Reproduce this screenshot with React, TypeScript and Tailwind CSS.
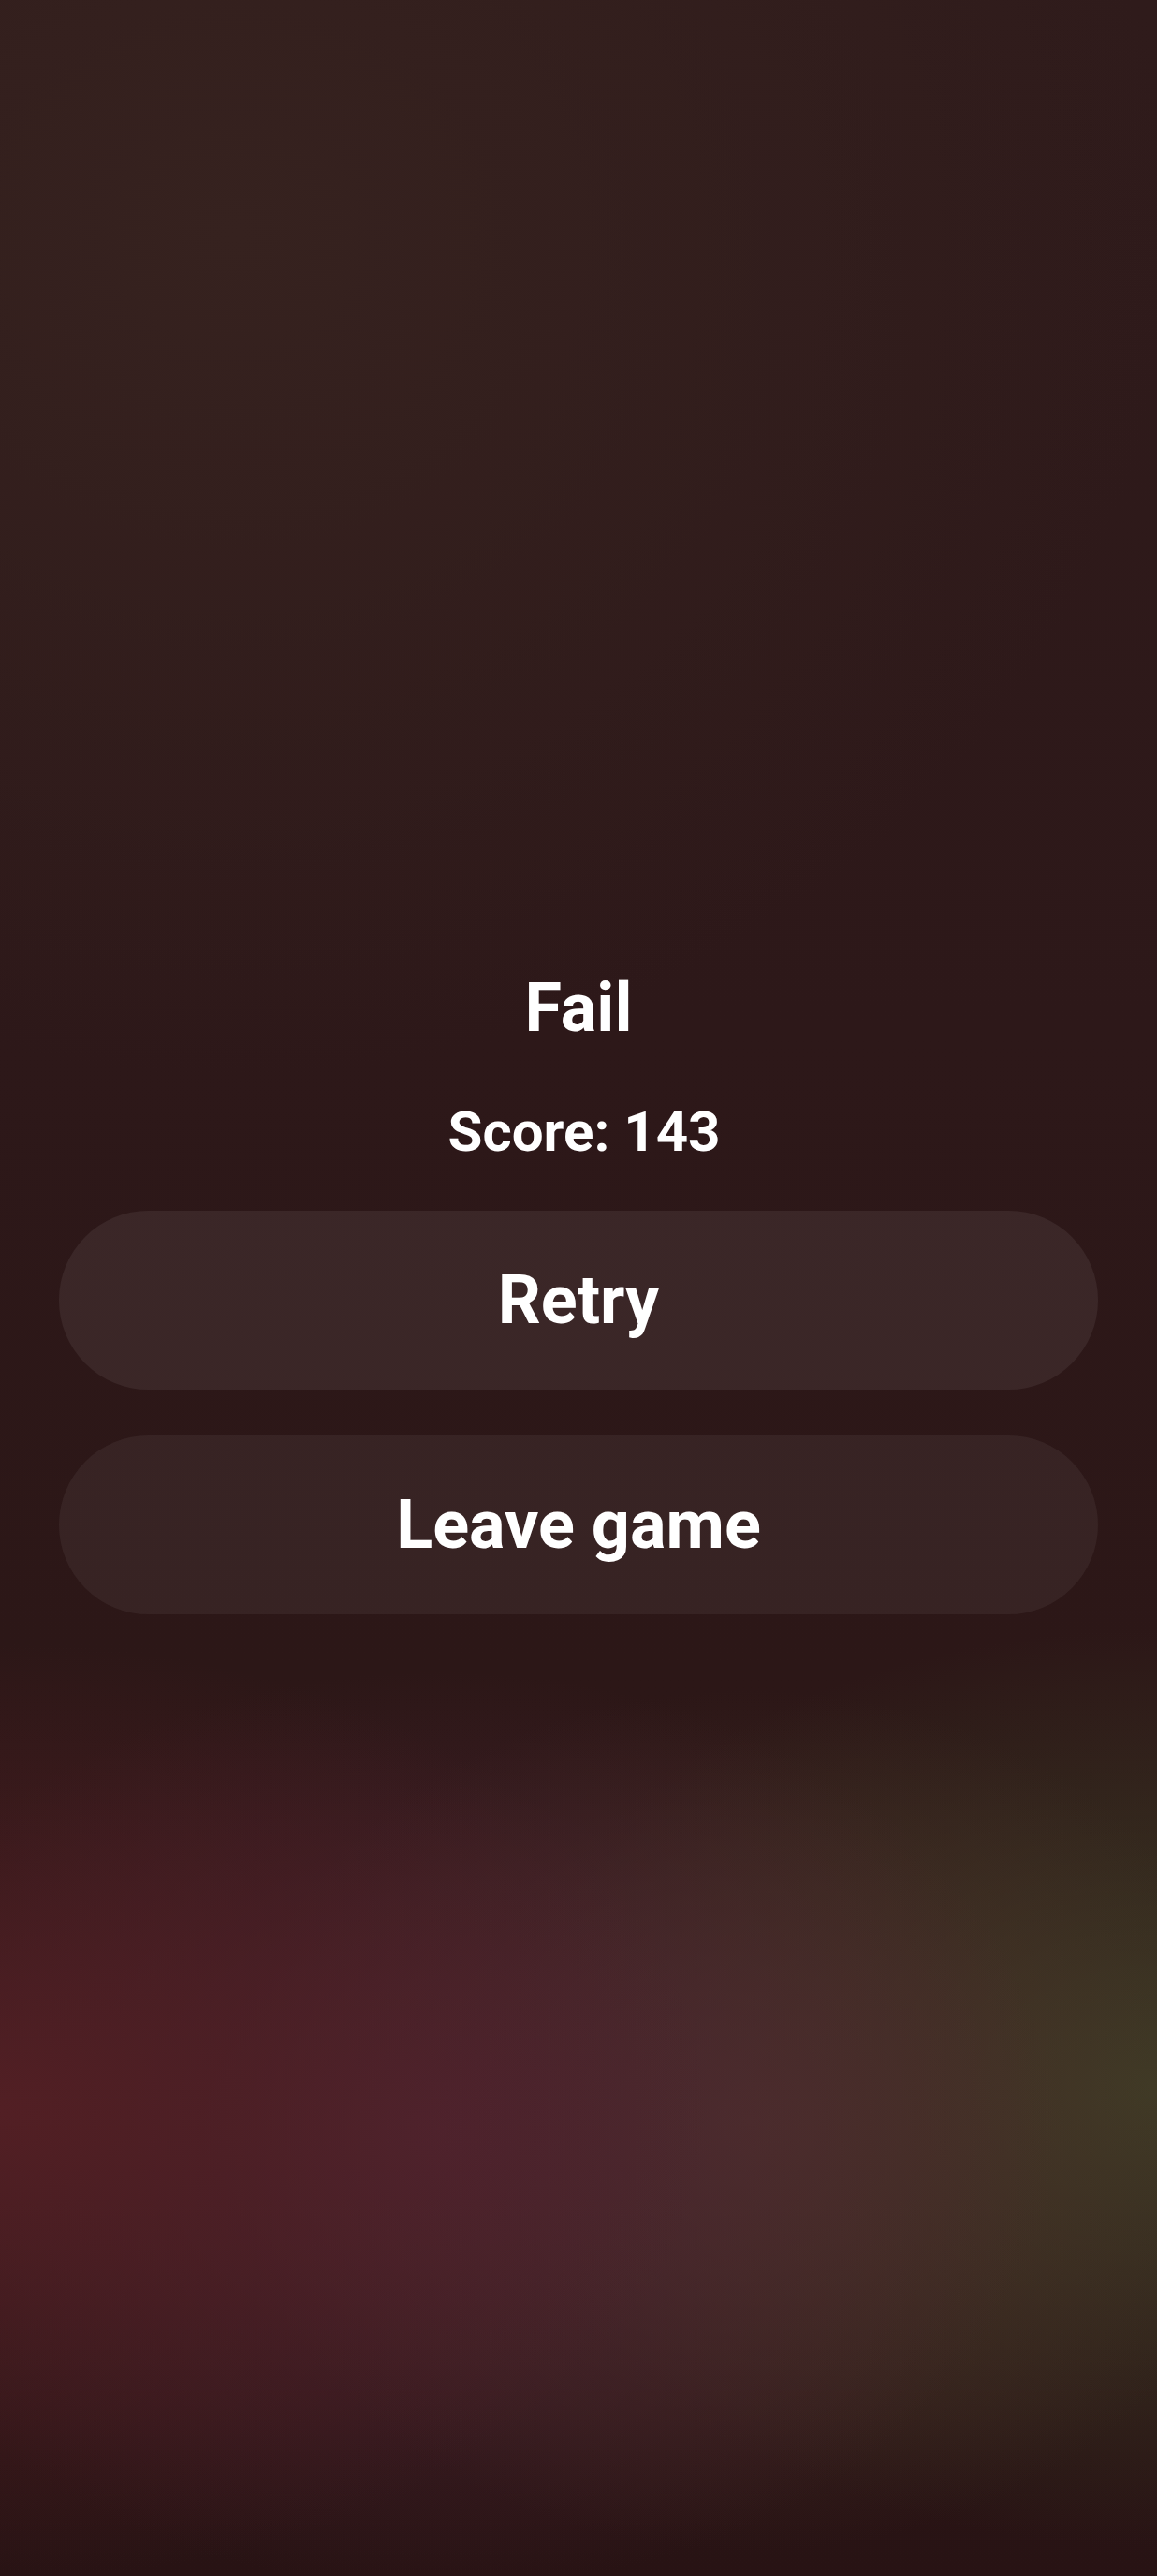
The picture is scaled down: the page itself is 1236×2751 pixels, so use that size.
import React from "react";

export default function App() {
  return (
    <div
      className="relative w-full min-h-[2751px] bg-[#2d1819] bg-[radial-gradient(ellipse_760px_500px_at_0px_2255px,#521f24_0%,rgba(82,31,36,0)_100%),radial-gradient(ellipse_660px_490px_at_470px_2275px,#4c2431_0%,rgba(76,36,49,0)_100%),radial-gradient(ellipse_560px_460px_at_800px_2265px,#4a3229_0%,rgba(74,50,41,0)_100%),radial-gradient(ellipse_720px_490px_at_1236px_2230px,#3d3c25_0%,rgba(61,60,37,0)_100%),radial-gradient(ellipse_1000px_900px_at_250px_250px,#36221f_0%,rgba(54,34,31,0)_100%),linear-gradient(180deg,#2f1b1b_0%,#2d1819_40%,#2c1717_65%,#2b1616_85%,#281314_100%)]"
      style={{ fontFamily: "Roboto, 'Liberation Sans', sans-serif" }}
    >
      <div className="flex flex-col items-center pt-[1041px] px-[63px]">
        <h1 className="text-[72px] leading-none font-bold text-white">Fail</h1>
        <p className="mt-[66px] ml-[12px] text-[60px] leading-none font-bold text-white">Score: 143</p>
        <div className="mt-[54px] w-full flex flex-col gap-[49px]">
          <button className="w-full h-[191px] rounded-full bg-white/[0.065] text-white text-[72px] leading-none font-bold flex items-center justify-center">
            Retry
          </button>
          <button className="w-full h-[191px] rounded-full bg-white/[0.055] text-white text-[72px] leading-none font-bold flex items-center justify-center">
            Leave game
          </button>
        </div>
      </div>
    </div>
  );
}
